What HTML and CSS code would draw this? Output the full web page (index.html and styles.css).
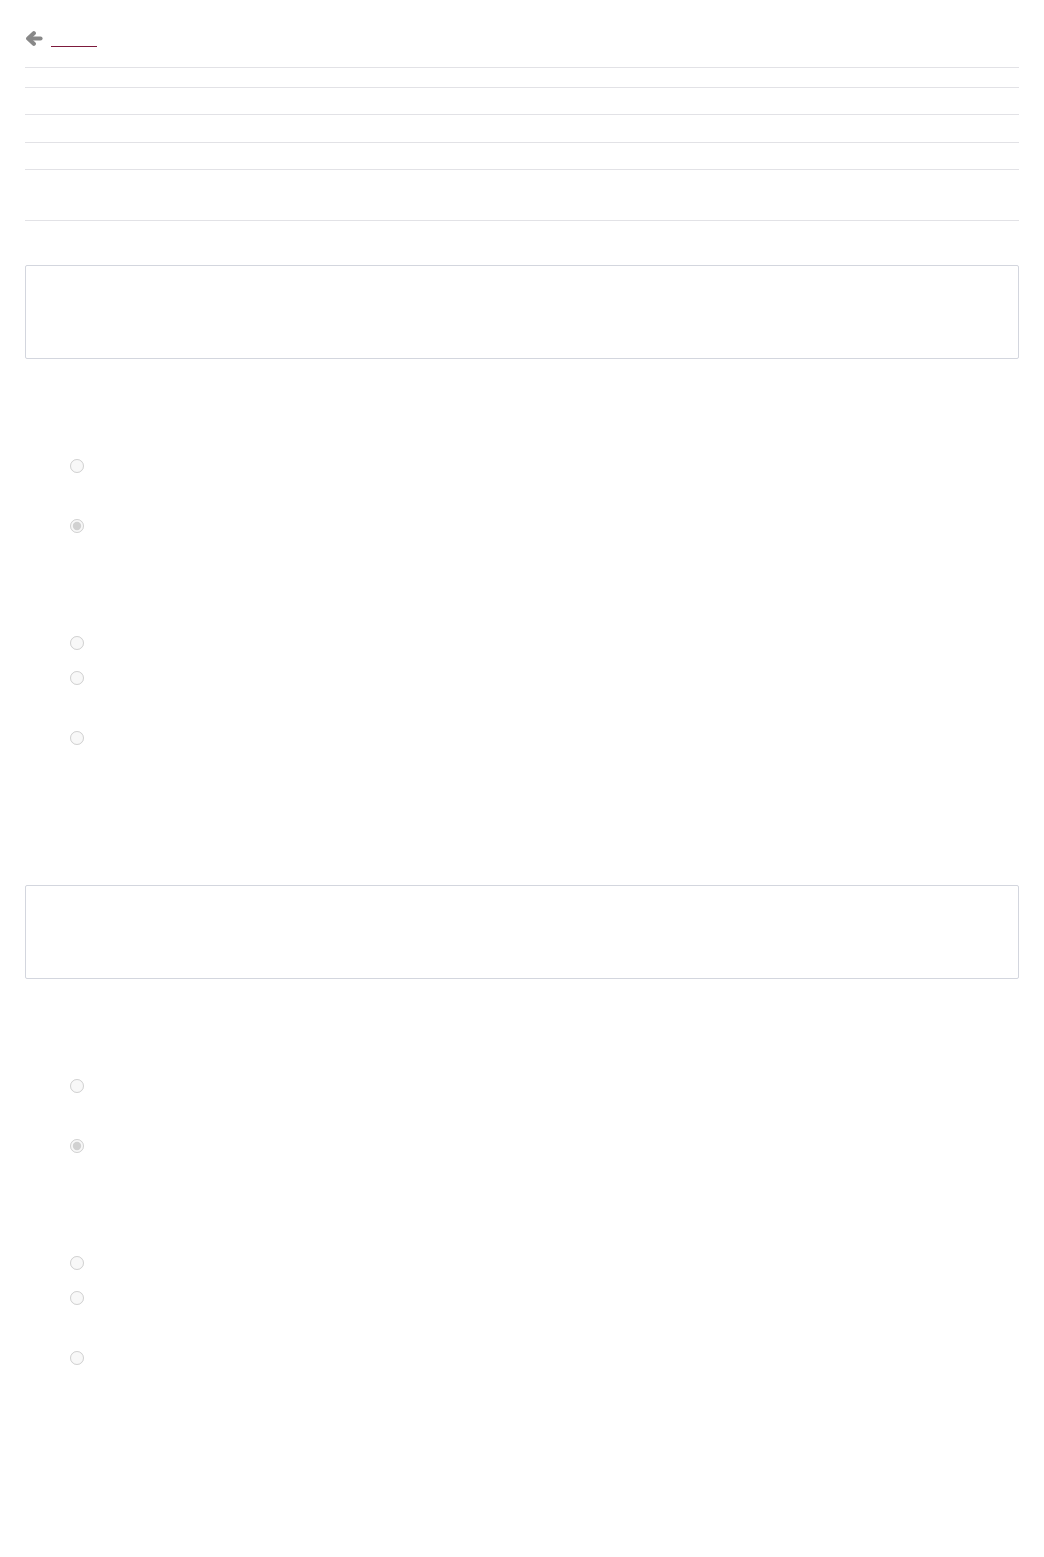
FILE: index.html
```html
<!DOCTYPE html>
<html lang="ru">
<head>
  <meta charset="UTF-8">
  <title>Тест</title>
  <link rel="stylesheet" href="styles.css">
</head>
<body>
  <div class="page">
    <div class="back">
      <svg class="back-icon" width="18" height="15" viewBox="0 0 18 15">
        <path d="M4 7.5H15.5" stroke="#888" stroke-width="4.2" stroke-linecap="round" fill="none"/>
        <path d="M8.8 2.3L3.2 7.5L8.8 12.7" stroke="#888" stroke-width="4.2" stroke-linecap="round" stroke-linejoin="round" fill="none"/>
      </svg>
      <a class="back-link" href="#"></a>
    </div>

    <!-- сводка -->
    <div class="summary">
      <div class="summary-row r1"></div>
      <div class="summary-row r2"></div>
      <div class="summary-row r3"></div>
      <div class="summary-row r4"></div>
      <div class="summary-row r5"></div>
    </div>

    <!-- вопрос 1 -->
    <div class="question">
      <div class="question-text"></div>
      <div class="group first">
        <label class="option double"><input type="radio" name="q1a" disabled></label>
        <label class="option double"><input type="radio" name="q1a" disabled checked></label>
      </div>
      <div class="group">
        <label class="option single"><input type="radio" name="q1b" disabled></label>
        <label class="option double"><input type="radio" name="q1b" disabled></label>
        <label class="option double"><input type="radio" name="q1b" disabled></label>
      </div>
    </div>

    <!-- вопрос 2 -->
    <div class="question">
      <div class="question-text"></div>
      <div class="group first">
        <label class="option double"><input type="radio" name="q2a" disabled></label>
        <label class="option double"><input type="radio" name="q2a" disabled checked></label>
      </div>
      <div class="group">
        <label class="option single"><input type="radio" name="q2b" disabled></label>
        <label class="option double"><input type="radio" name="q2b" disabled></label>
        <label class="option double"><input type="radio" name="q2b" disabled></label>
      </div>
    </div>
  </div>
</body>
</html>
```

FILE: styles.css
```css
body {
  margin: 0;
  background-color: #fff;
  font-family: "Open Sans", "Liberation Sans", sans-serif;
  font-size: 14px;
  color: #333;
}
.page {
  padding: 31px 25px 0;
}
.back {
  display: flex;
  align-items: flex-start;
  gap: 8px;
  height: 16px;
}
.back-icon {
  display: block;
}
.back-link {
  display: inline-block;
  width: 46px;
  height: 15px;
  border-bottom: 1px solid #7d1a3c;
}
/* таблица с итогами */
.summary {
  margin-top: 20px;
  border-bottom: 1px solid #e2e2e6;
}
.summary-row {
  border-top: 1px solid #e2e2e6;
}
.summary-row.r1 { height: 19px; }
.summary-row.r2 { height: 26px; }
.summary-row.r3 { height: 27px; }
.summary-row.r4 { height: 26px; }
.summary-row.r5 { height: 50px; }

.question {
  padding-top: 44px;
  padding-bottom: 50px;
}
.question-text {
  height: 92px;
  border: 1px solid #d3d6de;
  border-radius: 2px;
}
.group {
  margin-top: 57px;
}
.group.first {
  margin-top: 100px;
}
.option {
  display: flex;
  align-items: flex-start;
  padding-left: 45px;
}
.option.single { height: 35px; }
.option.double { height: 60px; }
.option input {
  margin: 0;
  width: 14px;
  height: 14px;
}
```
